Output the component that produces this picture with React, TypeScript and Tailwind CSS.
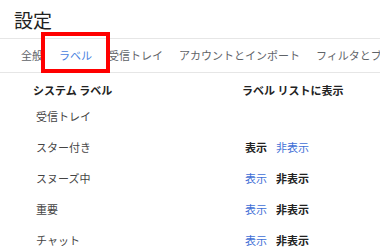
export default function App() {
  const tabs = ["全般", "ラベル", "受信トレイ", "アカウントとインポート", "フィルタとブロック中のアドレス"];

  const rows = [
    { name: "受信トレイ", show: null },
    { name: "スター付き", show: true },
    { name: "スヌーズ中", show: false },
    { name: "重要", show: false },
    { name: "チャット", show: false },
  ];

  return (
    <div
      className="relative w-[380px] h-[251px] overflow-hidden bg-white text-[#222]"
      style={{ fontFamily: '"Noto Sans CJK JP", "Noto Sans", sans-serif' }}
    >
      {/* タイトル */}
      <div className="h-[38px] pl-[14px] pt-[7px] text-[19px] leading-[26px] text-[#222]">設定</div>

      {/* タブ */}
      <div className="flex h-[35px] items-center gap-[16px] whitespace-nowrap border-y border-[#e6e6e6] pl-[21px] text-[11px] text-[#5f6368]">
        {tabs.map((t, i) => (
          <span key={t} className={i === 1 ? "text-[#4a7fe0]" : ""}>
            {t}
          </span>
        ))}
      </div>

      {/* 注目枠 */}
      <div className="absolute left-[41px] top-[32px] h-[41px] w-[69px] border-4 border-[#ff0000]" />

      {/* ラベル一覧 */}
      <div className="pl-[33px] text-[11px]">
        <div className="flex h-[28px] items-end pb-[3px] font-bold text-[#222]">
          <div className="w-[209px]">システム ラベル</div>
          <div>ラベル リストに表示</div>
        </div>
        {rows.map((r) => (
          <div key={r.name} className="flex h-[31px] items-center">
            <div className="w-[212px] pl-[3px] text-[#444]">{r.name}</div>
            {r.show !== null && (
              <div className="flex gap-[9px]">
                <span className={r.show ? "font-bold text-[#222]" : "text-[#3f6fd6]"}>表示</span>
                <span className={r.show ? "text-[#3f6fd6]" : "font-bold text-[#222]"}>非表示</span>
              </div>
            )}
          </div>
        ))}
      </div>
    </div>
  );
}
